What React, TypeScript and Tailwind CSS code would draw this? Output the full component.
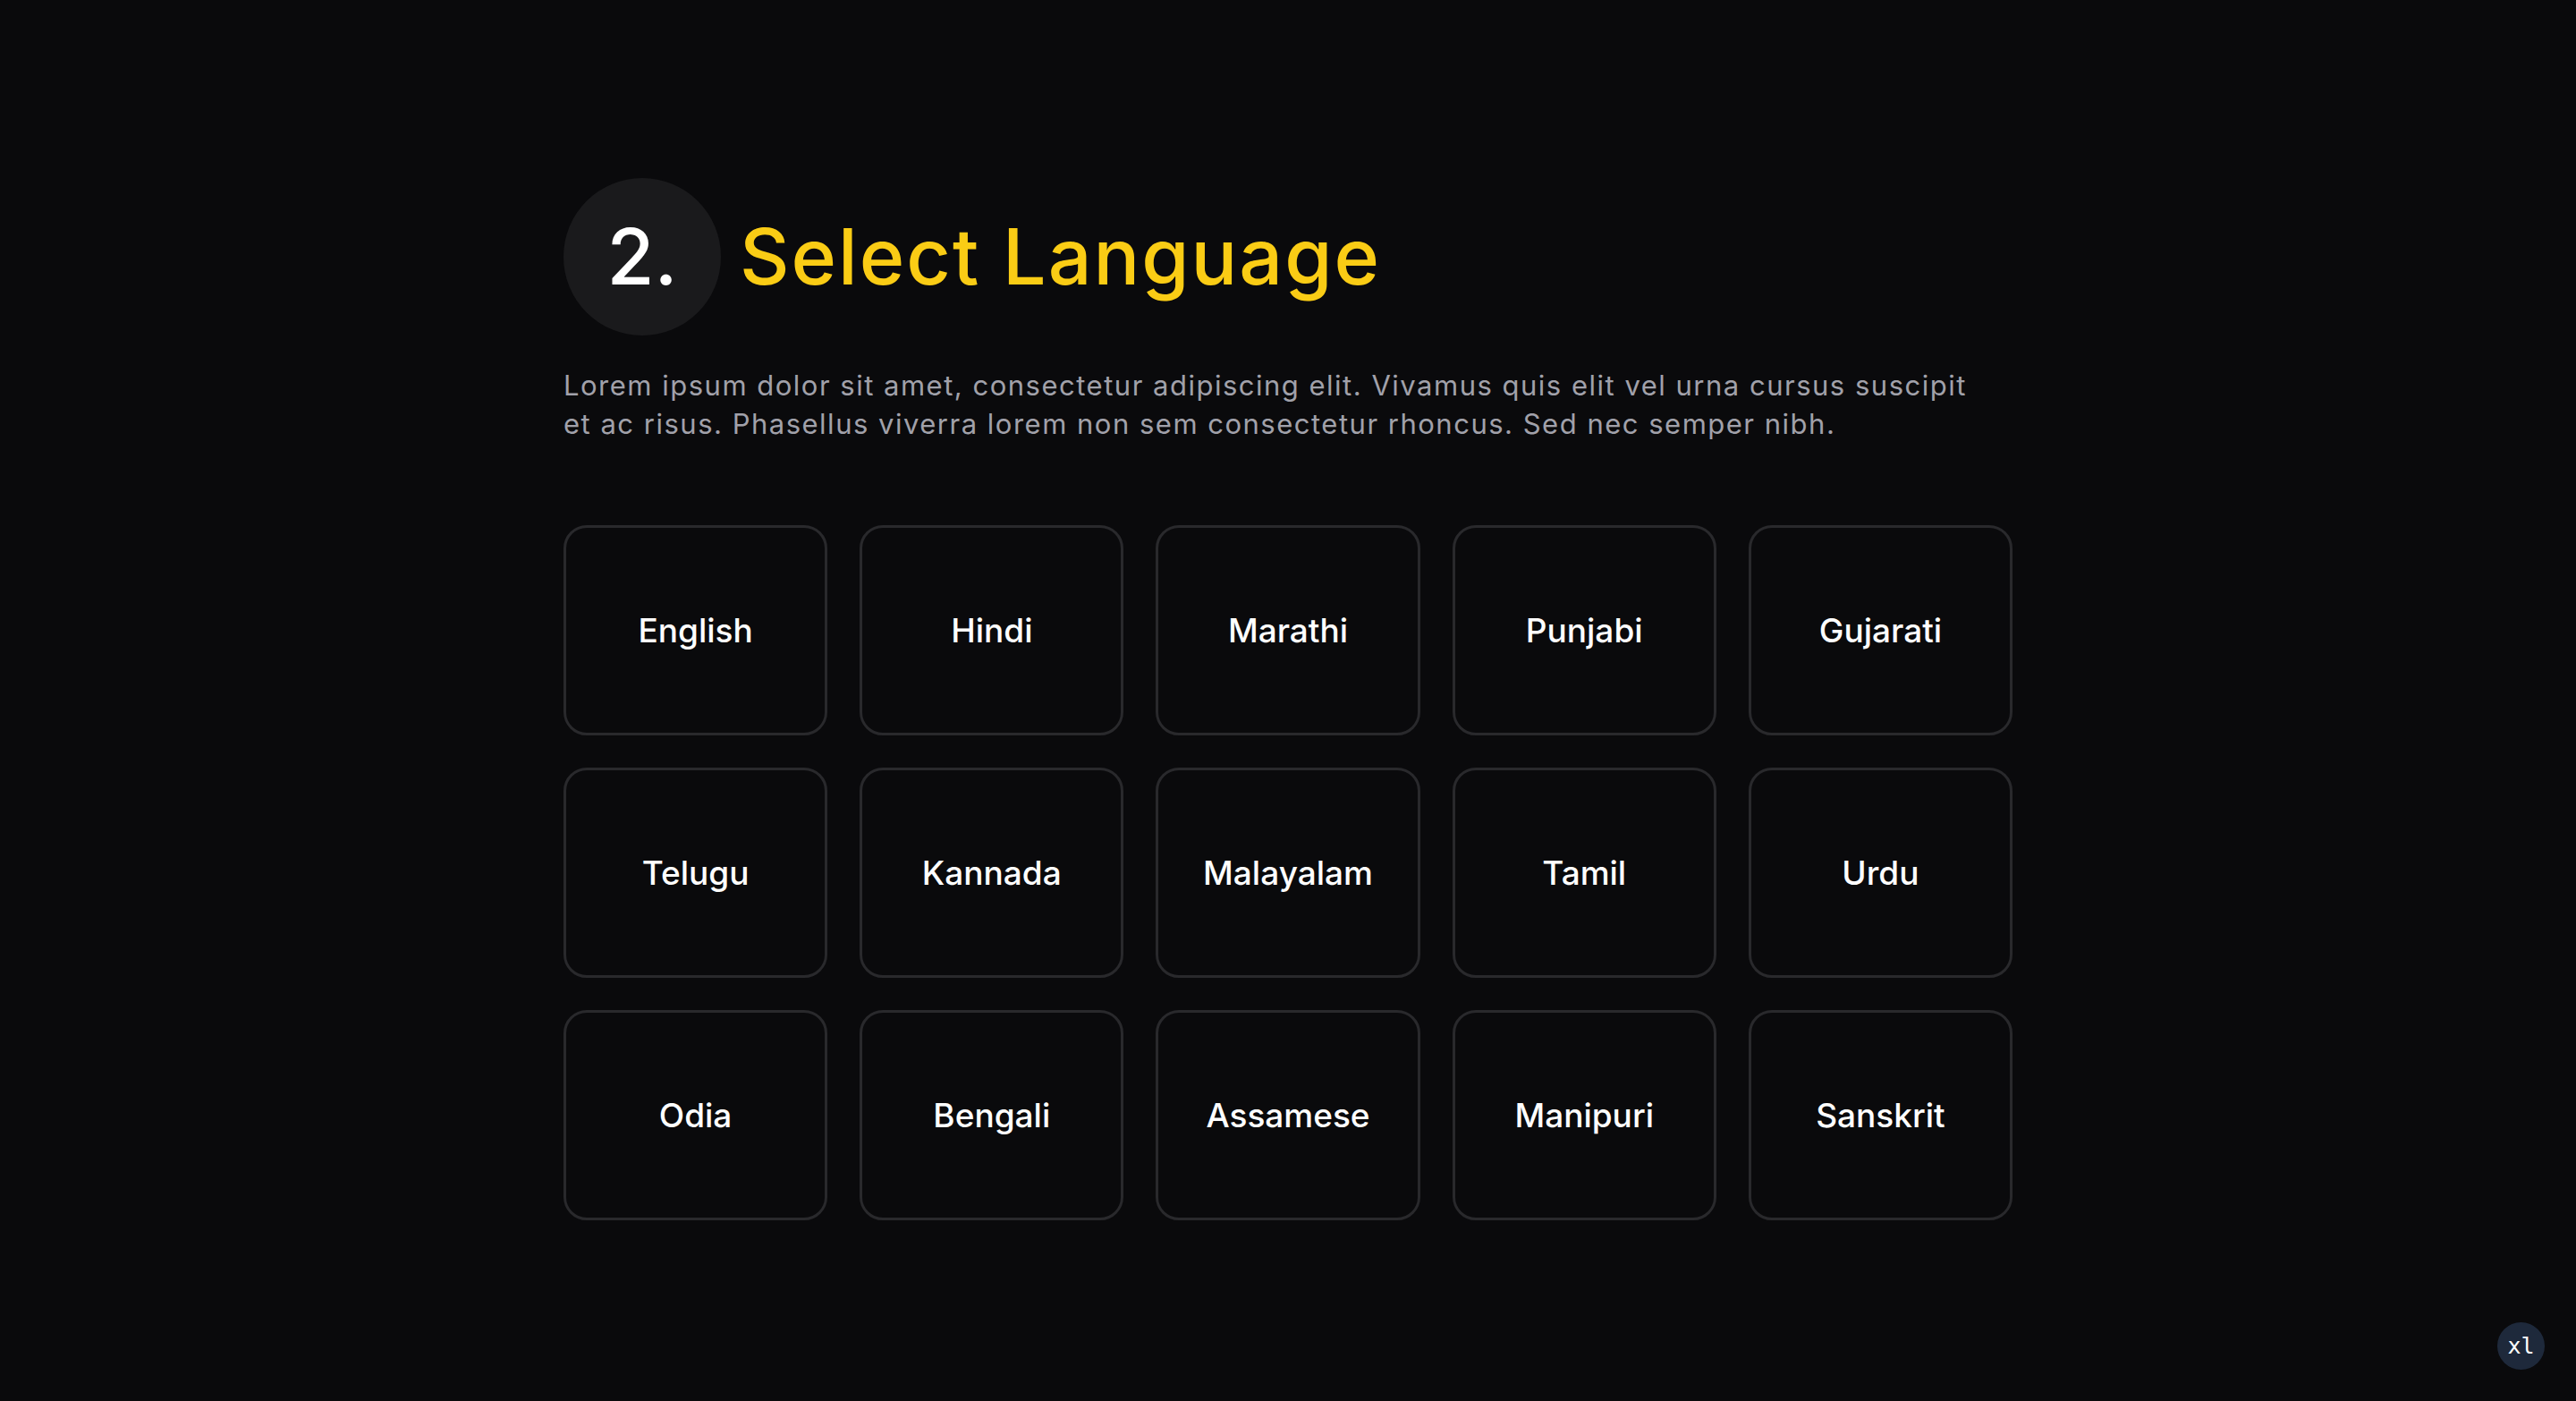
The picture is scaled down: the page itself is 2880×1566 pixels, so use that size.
const languages = [
  "English",
  "Hindi",
  "Marathi",
  "Punjabi",
  "Gujarati",
  "Telugu",
  "Kannada",
  "Malayalam",
  "Tamil",
  "Urdu",
  "Odia",
  "Bengali",
  "Assamese",
  "Manipuri",
  "Sanskrit",
];

function LanguageCard({name}: {name: string}) {
  return (
    <button className="h-[235px] rounded-[26px] border-[3px] border-[#29292c] bg-[#0a0a0c] flex items-center justify-center text-white text-[37px] font-medium">
      {name}
    </button>
  );
}

export default function App() {
  return (
    <div className="relative min-h-screen bg-[#0a0a0c] font-['Inter',sans-serif]">
      <div className="mx-auto w-[1620px] pt-[199px]">
        <div className="flex items-center gap-[21px]">
          <div className="w-[176px] h-[176px] rounded-full bg-[#1a1a1c] flex items-center justify-center text-white text-[86px] font-medium">
            2.
          </div>
          <h1 className="text-[#facc15] text-[86px] font-medium tracking-[2px]">Select Language</h1>
        </div>

        <p className="mt-[34px] w-[1595px] text-[#a1a1aa] text-[31px] leading-[43px] tracking-[1.5px]">
          Lorem ipsum dolor sit amet, consectetur adipiscing elit. Vivamus quis elit vel urna cursus suscipit et ac
          risus. Phasellus viverra lorem non sem consectetur rhoncus. Sed nec semper nibh.
        </p>

        <div className="mt-[92px] grid grid-cols-5 gap-[36px]">
          {languages.map((l) => (
            <LanguageCard key={l} name={l} />
          ))}
        </div>
      </div>

      <div className="fixed right-[35px] bottom-[35px] w-[53px] h-[53px] rounded-full bg-[#1e293b] flex items-center justify-center text-white text-[25px] font-['DejaVu_Sans_Mono',monospace]">
        xl
      </div>
    </div>
  );
}
